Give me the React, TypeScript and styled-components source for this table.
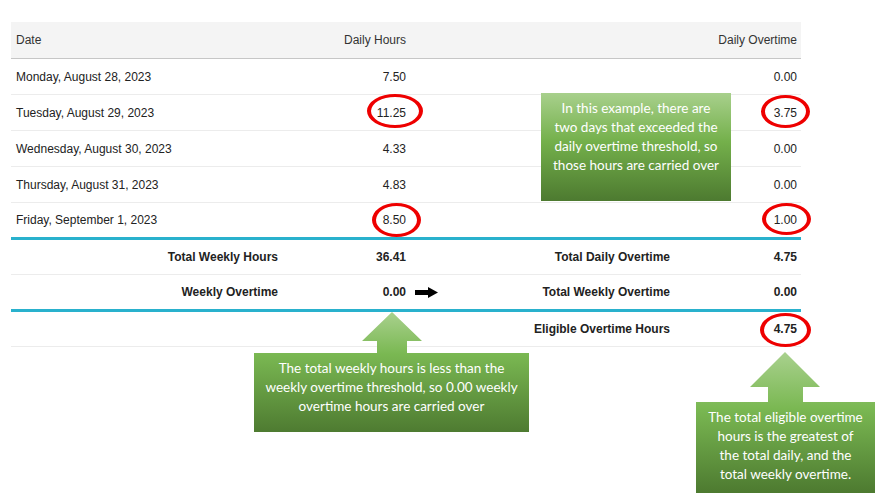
import React from 'react';
import styled, { createGlobalStyle } from 'styled-components';

const GlobalStyle = createGlobalStyle`
  body {
    margin: 0;
    background: #ffffff;
    font-family: "Liberation Sans", Arial, sans-serif;
  }
`;

type Line = 'head' | 'light' | 'teal';

const days = [
  { date: 'Monday, August 28, 2023', hours: '7.50', overtime: '0.00' },
  { date: 'Tuesday, August 29, 2023', hours: '11.25', overtime: '3.75' },
  { date: 'Wednesday, August 30, 2023', hours: '4.33', overtime: '0.00' },
  { date: 'Thursday, August 31, 2023', hours: '4.83', overtime: '0.00' },
  { date: 'Friday, September 1, 2023', hours: '8.50', overtime: '1.00' },
];

const circles = [
  { left: 367, top: 94, w: 56, h: 34 },
  { left: 761, top: 95, w: 49, h: 33 },
  { left: 372, top: 203, w: 49, h: 34 },
  { left: 762, top: 203, w: 49, h: 32 },
  { left: 760, top: 313, w: 51, h: 34 },
];

const App = () => {
  return (
    <Page>
      <GlobalStyle />
      <Table>
        <Row $h={37} $line="head">
          <Cell>Date</Cell>
          <Cell $right>Daily Hours</Cell>
          <Cell />
          <Cell $right>Daily Overtime</Cell>
        </Row>
        {days.map((d, i) => (
          <Row key={d.date} $h={i === days.length - 1 ? 37 : 36} $line={i === days.length - 1 ? 'teal' : 'light'}>
            <Cell>{d.date}</Cell>
            <Cell $right>{d.hours}</Cell>
            <Cell />
            <Cell $right>{d.overtime}</Cell>
          </Row>
        ))}
        <Row $h={35} $line="light">
          <Cell $right $bold>Total Weekly Hours</Cell>
          <Cell $right $bold>36.41</Cell>
          <Cell $right $bold>Total Daily Overtime</Cell>
          <Cell $right $bold>4.75</Cell>
        </Row>
        <Row $h={37} $line="teal">
          <Cell $right $bold>Weekly Overtime</Cell>
          <Cell $right $bold>0.00</Cell>
          <Cell $right $bold>
            <ArrowWrap>
              <svg width="23" height="11" viewBox="0 0 23 11">
                <rect x="0" y="3" width="15" height="5" fill="#000" />
                <polygon points="13,0 23,5.5 13,11" fill="#000" />
              </svg>
              <span>Total Weekly Overtime</span>
            </ArrowWrap>
          </Cell>
          <Cell $right $bold>0.00</Cell>
        </Row>
        <Row $h={35} $line="light">
          <Cell />
          <Cell />
          <Cell $right $bold>Eligible Overtime Hours</Cell>
          <Cell $right $bold>4.75</Cell>
        </Row>
      </Table>

      {circles.map((c, i) => (
        <Ring key={i} style={{ left: c.left, top: c.top, width: c.w, height: c.h }} />
      ))}

      <Note>
        In this example, there are<br />
        two days that exceeded the<br />
        daily overtime threshold, so<br />
        those hours are carried over
      </Note>

      <WeeklyCallout>
        The total weekly hours is less than the<br />
        weekly overtime threshold, so 0.00 weekly<br />
        overtime hours are carried over
      </WeeklyCallout>

      <EligibleCallout>
        The total eligible overtime<br />
        hours is the greatest of<br />
        the total daily, and the<br />
        total weekly overtime.
      </EligibleCallout>
    </Page>
  );
};

export default App;

const Page = styled.div`
  position: relative;
  width: 879px;
  height: 502px;
  box-sizing: border-box;
  padding: 22px 0 0 11px;
  overflow: hidden;
`;

const Table = styled.div`
  width: 790px;
  font-size: 12px;
  color: #222;
`;

const lineColor: Record<Line, string> = {
  head: '1px solid #c6c6c6',
  light: '1px solid #ececec',
  teal: '3px solid #29b1cd',
};

const Row = styled.div<{ $h: number; $line: Line }>`
  display: grid;
  grid-template-columns: 271px 128px 264px 127px;
  align-items: center;
  box-sizing: border-box;
  height: ${(p) => p.$h}px;
  border-bottom: ${(p) => lineColor[p.$line]};
  background: ${(p) => (p.$line === 'head' ? '#f4f4f4' : 'transparent')};
  color: ${(p) => (p.$line === 'head' ? '#333' : '#222')};
`;

const Cell = styled.div<{ $right?: boolean; $bold?: boolean }>`
  padding: 0 4px 0 5px;
  text-align: ${(p) => (p.$right ? 'right' : 'left')};
  font-weight: ${(p) => (p.$bold ? 700 : 400)};
  white-space: nowrap;
`;

const ArrowWrap = styled.div`
  display: flex;
  justify-content: space-between;
  align-items: center;

  svg {
    display: block;
  }
`;

const Ring = styled.div`
  position: absolute;
  box-sizing: border-box;
  border-style: solid;
  border-color: #ee0000;
  border-width: 3px 4px;
  border-radius: 50%;
`;

const calloutText = `
  position: absolute;
  box-sizing: border-box;
  color: #ffffff;
  font-family: Lato, "Open Sans", sans-serif;
  font-size: 13.5px;
  line-height: 19px;
  text-align: center;
  white-space: nowrap;
`;

const Note = styled.div`
  ${calloutText}
  left: 541px;
  top: 93px;
  width: 190px;
  height: 108px;
  padding: 6px 0 0;
  background: linear-gradient(to bottom, #a8d08c 0%, #74b04b 45%, #4d7a30 100%);
`;

const WeeklyCallout = styled.div`
  ${calloutText}
  left: 254px;
  top: 312px;
  width: 275px;
  height: 120px;
  padding: 47px 0 0;
  background: linear-gradient(to bottom, #a9d18e 0%, #7ab852 35%, #4e7b31 100%);
  clip-path: polygon(138px 0, 168px 29px, 153px 29px, 153px 41px, 100% 41px, 100% 100%, 0 100%, 0 41px, 123px 41px, 123px 29px, 108px 29px);
`;

const EligibleCallout = styled.div`
  ${calloutText}
  left: 696px;
  top: 352px;
  width: 179px;
  height: 141px;
  padding: 56px 0 0;
  background: linear-gradient(to bottom, #a9d18e 0%, #7ab852 40%, #4d7a30 100%);
  clip-path: polygon(89px 0, 124px 35px, 107px 35px, 107px 50px, 100% 50px, 100% 100%, 0 100%, 0 50px, 72px 50px, 72px 35px, 54px 35px);
`;
